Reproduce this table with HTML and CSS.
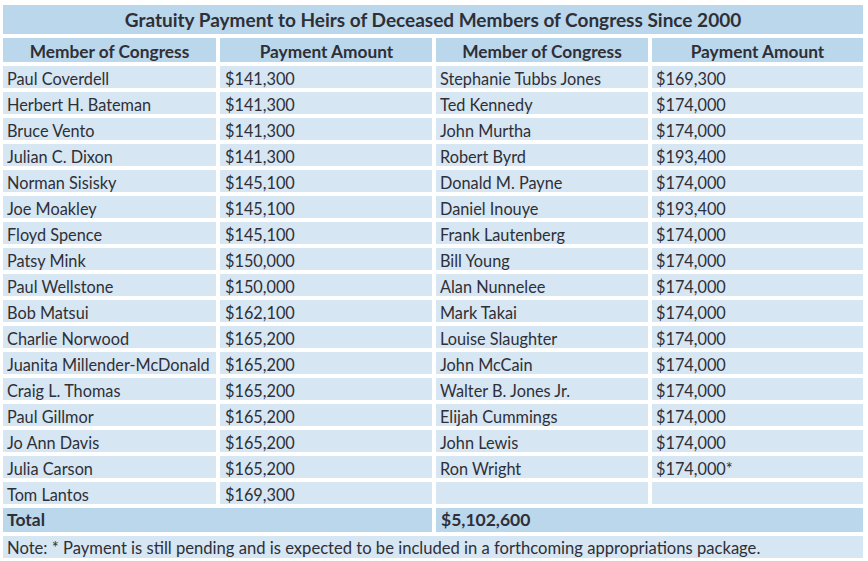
FILE: index.html
```html
<!DOCTYPE html>
<html>
<head>
<meta charset="utf-8">
<link rel="stylesheet" href="styles.css">
</head>
<body>
<div class="table">
  <div class="cell title span4">Gratuity Payment to Heirs of Deceased Members of Congress Since 2000</div>
  <div class="cell head">Member of Congress</div>
  <div class="cell head">Payment Amount</div>
  <div class="cell head">Member of Congress</div>
  <div class="cell head">Payment Amount</div>

  <div class="cell">Paul Coverdell</div><div class="cell">$141,300</div><div class="cell">Stephanie Tubbs Jones</div><div class="cell">$169,300</div>
  <div class="cell">Herbert H. Bateman</div><div class="cell">$141,300</div><div class="cell">Ted Kennedy</div><div class="cell">$174,000</div>
  <div class="cell">Bruce Vento</div><div class="cell">$141,300</div><div class="cell">John Murtha</div><div class="cell">$174,000</div>
  <div class="cell">Julian C. Dixon</div><div class="cell">$141,300</div><div class="cell">Robert Byrd</div><div class="cell">$193,400</div>
  <div class="cell">Norman Sisisky</div><div class="cell">$145,100</div><div class="cell">Donald M. Payne</div><div class="cell">$174,000</div>
  <div class="cell">Joe Moakley</div><div class="cell">$145,100</div><div class="cell">Daniel Inouye</div><div class="cell">$193,400</div>
  <div class="cell">Floyd Spence</div><div class="cell">$145,100</div><div class="cell">Frank Lautenberg</div><div class="cell">$174,000</div>
  <div class="cell">Patsy Mink</div><div class="cell">$150,000</div><div class="cell">Bill Young</div><div class="cell">$174,000</div>
  <div class="cell">Paul Wellstone</div><div class="cell">$150,000</div><div class="cell">Alan Nunnelee</div><div class="cell">$174,000</div>
  <div class="cell">Bob Matsui</div><div class="cell">$162,100</div><div class="cell">Mark Takai</div><div class="cell">$174,000</div>
  <div class="cell">Charlie Norwood</div><div class="cell">$165,200</div><div class="cell">Louise Slaughter</div><div class="cell">$174,000</div>
  <div class="cell">Juanita Millender-McDonald</div><div class="cell">$165,200</div><div class="cell">John McCain</div><div class="cell">$174,000</div>
  <div class="cell">Craig L. Thomas</div><div class="cell">$165,200</div><div class="cell">Walter B. Jones Jr.</div><div class="cell">$174,000</div>
  <div class="cell">Paul Gillmor</div><div class="cell">$165,200</div><div class="cell">Elijah Cummings</div><div class="cell">$174,000</div>
  <div class="cell">Jo Ann Davis</div><div class="cell">$165,200</div><div class="cell">John Lewis</div><div class="cell">$174,000</div>
  <div class="cell">Julia Carson</div><div class="cell">$165,200</div><div class="cell">Ron Wright</div><div class="cell">$174,000*</div>
  <div class="cell">Tom Lantos</div><div class="cell">$169,300</div><div class="cell"></div><div class="cell"></div>

  <div class="cell total span2">Total</div>
  <div class="cell total span2">$5,102,600</div>
  <div class="cell note span4">Note: * Payment is still pending and is expected to be included in a forthcoming appropriations package.</div>
</div>
</body>
</html>
```
FILE: styles.css
```css
html, body {
  margin: 0;
  padding: 0;
  background: #ffffff;
}
body {
  font-family: Lato, "Open Sans", sans-serif;
  color: #2f2f37;
}
.table {
  margin: 5px 0 0 3px;
  width: 860px;
  display: grid;
  grid-template-columns: 213px 212px 212px 211px;
  grid-template-rows: 29px 24px repeat(17, 22px) 24px 22px;
  column-gap: 4px;
  row-gap: 4px;
}
.cell {
  background: #d6e6f3;
  font-size: 16.3px;
  line-height: 23px;
  padding: 1px 4px 0;
  box-sizing: border-box;
  overflow: hidden;
  white-space: nowrap;
}
.cell:nth-child(4n+3) { padding-left: 5px; }
.span2 { grid-column: span 2; }
.span4 { grid-column: span 4; }
.title {
  background: #bad7eb;
  font-weight: 700;
  font-size: 19px;
  text-align: center;
  line-height: 29px;
  padding-top: 0;
}
.head {
  background: #bad7eb;
  font-weight: 700;
  font-size: 17.3px;
  text-align: center;
  line-height: 24px;
  padding-top: 2px;
}
.total {
  background: #bad7eb;
  font-weight: 700;
  font-size: 17.5px;
  line-height: 24px;
  padding-top: 0;
}
.note {
  background: #d6e6f3;
  font-size: 16.6px;
}
```
